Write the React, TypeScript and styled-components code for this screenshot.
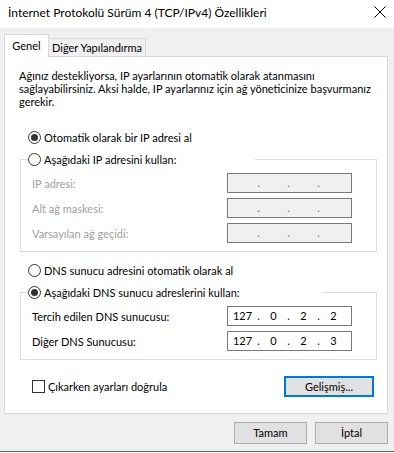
import React from 'react'
import styled, { createGlobalStyle } from 'styled-components'

const GlobalStyle = createGlobalStyle`
  html, body {
    margin: 0;
    padding: 0;
    background: #ffffff;
  }
  body {
    font-family: Lato, "Noto Sans", "Liberation Sans", sans-serif;
    font-size: 11px;
    color: #000000;
  }
`

const Window = styled.div`
  width: 394px;
  height: 452px;
  box-sizing: border-box;
  display: flex;
  flex-direction: column;
  background: #f0f0f0;
  border-bottom: 1px solid #5f5f5f;
`

const TitleBar = styled.div`
  height: 28px;
  flex: none;
  display: flex;
  align-items: center;
  background: #ffffff;
  padding-left: 8px;
`

const Title = styled.div`
  flex: 1;
  font-size: 12px;
  padding-bottom: 3px;
  white-space: nowrap;
`

const CloseButton = styled.div`
  width: 28px;
  height: 28px;
  display: flex;
  align-items: center;
  justify-content: center;
  padding-bottom: 4px;
  box-sizing: border-box;
`

const Body = styled.div`
  flex: 1;
  display: flex;
  flex-direction: column;
  padding: 6px 6px 0 4px;
`

const TabStrip = styled.div`
  display: flex;
  align-items: flex-end;
  height: 22px;
`

const Tab = styled.div<{ $active?: boolean }>`
  box-sizing: border-box;
  display: flex;
  align-items: center;
  justify-content: center;
  border: 1px solid #d9d9d9;
  border-bottom: none;
  white-space: nowrap;
  width: ${p => p.$active ? '45px' : '98px'};
  height: ${p => p.$active ? '23px' : '18px'};
  margin-bottom: ${p => p.$active ? '-1px' : '0'};
  margin-left: ${p => p.$active ? '0' : '-1px'};
  background: ${p => p.$active ? '#ffffff' : '#f0f0f0'};
  position: relative;
  z-index: ${p => p.$active ? 1 : 0};
  padding-bottom: ${p => p.$active ? '1px' : '0'};
`

const Panel = styled.div`
  box-sizing: border-box;
  height: 358px;
  border: 1px solid #d9d9d9;
  background: #ffffff;
  display: flex;
  flex-direction: column;
  padding: 12px 10px 0 15px;
`

const Intro = styled.div`
  margin-left: -1px;
  line-height: 13px;
  white-space: nowrap;
`

const RadioRow = styled.label<{ $top?: number }>`
  display: flex;
  align-items: center;
  gap: 3px;
  height: 16px;
  margin-left: 8px;
  margin-top: ${p => p.$top ?? 0}px;
  white-space: nowrap;
`

const RadioCircle = styled.span<{ $checked?: boolean }>`
  box-sizing: border-box;
  flex: none;
  width: 13px;
  height: 13px;
  border-radius: 50%;
  border: 1px solid #333333;
  background: #ffffff;
  display: inline-flex;
  align-items: center;
  justify-content: center;

  &::after {
    content: '';
    width: 7px;
    height: 7px;
    border-radius: 50%;
    background: #333333;
    display: ${p => p.$checked ? 'block' : 'none'};
  }
`

const Group = styled.fieldset<{ $top?: number }>`
  margin: ${p => p.$top ?? 0}px 0 0 0;
  padding: 0;
  border: 1px solid #dcdcdc;
  min-inline-size: 0;
`

const Legend = styled.legend<{ $width: number }>`
  padding: 0;
  margin-left: 7px;
  width: ${p => p.$width}px;
  height: 16px;
  display: flex;
  align-items: center;
  gap: 3px;
  white-space: nowrap;
`

const Rows = styled.div`
  display: flex;
  flex-direction: column;
  gap: 5px;
  padding: 6px 24px 8px 11px;
`

const FieldRow = styled.div<{ $disabled?: boolean }>`
  display: grid;
  grid-template-columns: 1fr 125px;
  align-items: center;
  height: 20px;
  color: ${p => p.$disabled ? '#a0a0a0' : '#000000'};
`

const IpBox = styled.div<{ $disabled?: boolean }>`
  box-sizing: border-box;
  width: 125px;
  height: 20px;
  border: 1px solid #7a7a7a;
  background: ${p => p.$disabled ? '#f0f0f0' : '#ffffff'};
  display: grid;
  grid-template-columns: 29px 3px 27px 3px 27px 3px 27px;
  align-items: center;
  color: #000000;
  padding-bottom: 1px;
`

const Seg = styled.span`
  text-align: center;
`

const Dot = styled.span<{ $disabled?: boolean }>`
  text-align: center;
  color: ${p => p.$disabled ? '#6b6b6b' : '#000000'};
`

const BottomRow = styled.div`
  display: flex;
  align-items: center;
  justify-content: space-between;
  margin-top: 16px;
  padding-left: 12px;
  padding-right: 3px;
`

const CheckRow = styled.label`
  display: flex;
  align-items: center;
  gap: 3px;
  white-space: nowrap;
`

const CheckBox = styled.span`
  box-sizing: border-box;
  width: 13px;
  height: 13px;
  border: 1px solid #333333;
  background: #ffffff;
`

const Button = styled.div<{ $default?: boolean; $width: number }>`
  box-sizing: border-box;
  width: ${p => p.$width}px;
  height: ${p => p.$default ? '21px' : '22px'};
  display: flex;
  align-items: center;
  justify-content: center;
  background: #e1e1e1;
  border: ${p => p.$default ? '2px solid #0078d7' : '1px solid #adadad'};
  padding-bottom: 1px;
  white-space: nowrap;
`

const Footer = styled.div`
  display: flex;
  justify-content: flex-end;
  gap: 8px;
  margin-top: 8px;
`

type Radio = { label: string; checked?: boolean }

const RadioButton = ({ label, checked, top }: Radio & { top?: number }) => (
  <RadioRow $top={top}>
    <RadioCircle $checked={checked} />
    {label}
  </RadioRow>
)

const IpField = ({ value }: { value?: string[] }) => {
  const disabled = !value
  const parts = value ?? ['', '', '', '']
  return (
    <IpBox $disabled={disabled}>
      {parts.map((p, i) => (
        <React.Fragment key={i}>
          {i > 0 && <Dot $disabled={disabled}>.</Dot>}
          <Seg>{p}</Seg>
        </React.Fragment>
      ))}
    </IpBox>
  )
}

const IP_ROWS = ['IP adresi:', 'Alt ağ maskesi:', 'Varsayılan ağ geçidi:']

const DNS_ROWS = [
  { label: 'Tercih edilen DNS sunucusu:', value: ['127', '0', '2', '2'] },
  { label: 'Diğer DNS Sunucusu:', value: ['127', '0', '2', '3'] },
]

export default function App() {
  return (
    <>
      <GlobalStyle />
      <Window>
        <TitleBar>
          <Title>İnternet Protokolü Sürüm 4 (TCP/IPv4) Özellikleri</Title>
          <CloseButton>
            <svg width="12" height="12" viewBox="0 0 12 12">
              <path d="M0.5 0.5 L11.5 11.5 M11.5 0.5 L0.5 11.5" stroke="#000" strokeWidth="1" />
            </svg>
          </CloseButton>
        </TitleBar>
        <Body>
          <TabStrip>
            <Tab $active>Genel</Tab>
            <Tab>Diğer Yapılandırma</Tab>
          </TabStrip>
          <Panel>
            <Intro>
              Ağınız destekliyorsa, IP ayarlarının otomatik olarak atanmasını<br />
              sağlayabilirsiniz. Aksi halde, IP ayarlarınız için ağ yöneticinize başvurmanız<br />
              gerekir.
            </Intro>

            <RadioButton label="Otomatik olarak bir IP adresi al" checked top={21} />
            <Group $top={6}>
              <Legend $width={227}>
                <RadioCircle />
                Aşağıdaki IP adresini kullan:
              </Legend>
              <Rows>
                {IP_ROWS.map(r => (
                  <FieldRow key={r} $disabled>
                    {r}
                    <IpField />
                  </FieldRow>
                ))}
              </Rows>
            </Group>

            <RadioButton label="DNS sunucu adresini otomatik olarak al" top={10} />
            <Group $top={6}>
              <Legend $width={294}>
                <RadioCircle $checked />
                Aşağıdaki DNS sunucu adreslerini kullan:
              </Legend>
              <Rows>
                {DNS_ROWS.map(r => (
                  <FieldRow key={r.label}>
                    {r.label}
                    <IpField value={r.value} />
                  </FieldRow>
                ))}
              </Rows>
            </Group>

            <BottomRow>
              <CheckRow>
                <CheckBox />
                Çıkarken ayarları doğrula
              </CheckRow>
              <Button $default $width={90}>Gelişmiş...</Button>
            </BottomRow>
          </Panel>
          <Footer>
            <Button $width={73}>Tamam</Button>
            <Button $width={73}>İptal</Button>
          </Footer>
        </Body>
      </Window>
    </>
  )
}
